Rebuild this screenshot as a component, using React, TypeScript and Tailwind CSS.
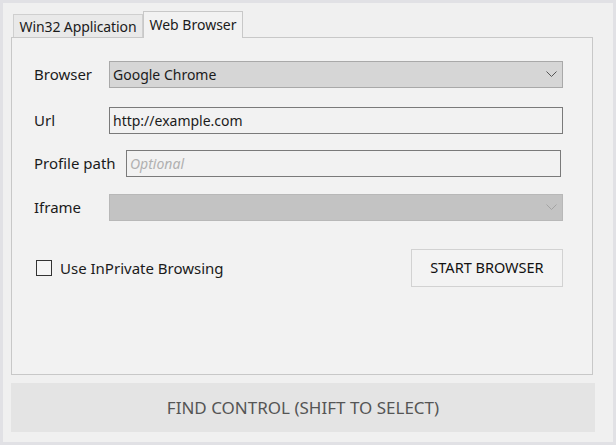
const Chevron = ({ color }: { color: string }) => (
  <svg width="11" height="7" viewBox="0 0 11 7" className="shrink-0">
    <polyline points="0.5,0.5 5.5,5.5 10.5,0.5" fill="none" stroke={color} strokeWidth="1" />
  </svg>
);

const App = () => {
  return (
    <div
      className="w-[616px] h-[445px] bg-[#e1e1e5] p-[3px] text-[#1b1b1b]"
      style={{ fontFamily: '"Noto Sans", "Open Sans", sans-serif' }}
    >
      <div className="w-full h-full bg-[#f0f0f0] pl-[8px] pt-[8px] flex flex-col">
        {/* tabs */}
        <div className="flex items-end pl-[2px] h-[26px]">
          <div className="h-[23px] w-[130px] flex items-center justify-center bg-[#e9e9e9] border border-b-0 border-[#cfcfcf] text-[14px] tracking-[-0.1px]">
            Win32 Application
          </div>
          <div className="relative z-10 -mb-px h-[27px] w-[100px] flex items-center justify-center bg-[#f2f2f2] border border-b-0 border-[#c8c8c8] text-[14px] pb-[2px]">
            Web Browser
          </div>
        </div>

        {/* panel */}
        <div className="w-[582px] h-[338px] border border-[#c8c8c8] bg-[#f2f2f2] pl-[22px] pt-[23px] flex flex-col">
          <div className="flex items-center h-[27px]">
            <span className="w-[75px] text-[15px]">Browser</span>
            <div className="w-[454px] h-[27px] bg-[#d6d6d6] border border-[#a9a9a9] flex items-center justify-between pl-[3px] pr-[5px] text-[14px]">
              <span>Google Chrome</span>
              <Chevron color="#555555" />
            </div>
          </div>

          <div className="flex items-center h-[27px] mt-[19px]">
            <span className="w-[75px] text-[15px]">Url</span>
            <div className="w-[454px] h-[27px] bg-[#f2f2f2] border border-[#7a7a7a] flex items-center pl-[3px] text-[14px]">
              http://example.com
            </div>
          </div>

          <div className="flex items-center h-[27px] mt-[16px]">
            <span className="w-[92px] text-[15px]">Profile path</span>
            <div className="w-[435px] h-[27px] bg-[#f2f2f2] border border-[#7a7a7a] flex items-center pl-[3px] text-[14px] italic text-[#b0b0b0]">
              Optional
            </div>
          </div>

          <div className="flex items-center h-[27px] mt-[17px]">
            <span className="w-[75px] text-[15px]">Iframe</span>
            <div className="w-[454px] h-[27px] bg-[#c3c3c3] border border-[#b8b8b8] flex items-center justify-end pr-[5px]">
              <Chevron color="#a3a3a3" />
            </div>
          </div>

          <div className="flex items-center justify-between w-[529px] mt-[28px] h-[38px]">
            <label className="flex items-center ml-[2px] gap-[8px] text-[15px]">
              <span className="w-[16px] h-[16px] border border-[#333333] bg-[#f5f5f5]" />
              Use InPrivate Browsing
            </label>
            <div className="w-[152px] h-[38px] border border-[#d2d2d2] bg-[#f3f3f3] flex items-center justify-center text-[14.5px] text-[#111111]">
              START BROWSER
            </div>
          </div>
        </div>

        {/* find control */}
        <div className="w-[584px] h-[49px] mt-[8px] bg-[#e4e4e4] flex items-center justify-center text-[17px] text-[#555555]">
          FIND CONTROL (SHIFT TO SELECT)
        </div>
      </div>
    </div>
  );
};

export default App;
